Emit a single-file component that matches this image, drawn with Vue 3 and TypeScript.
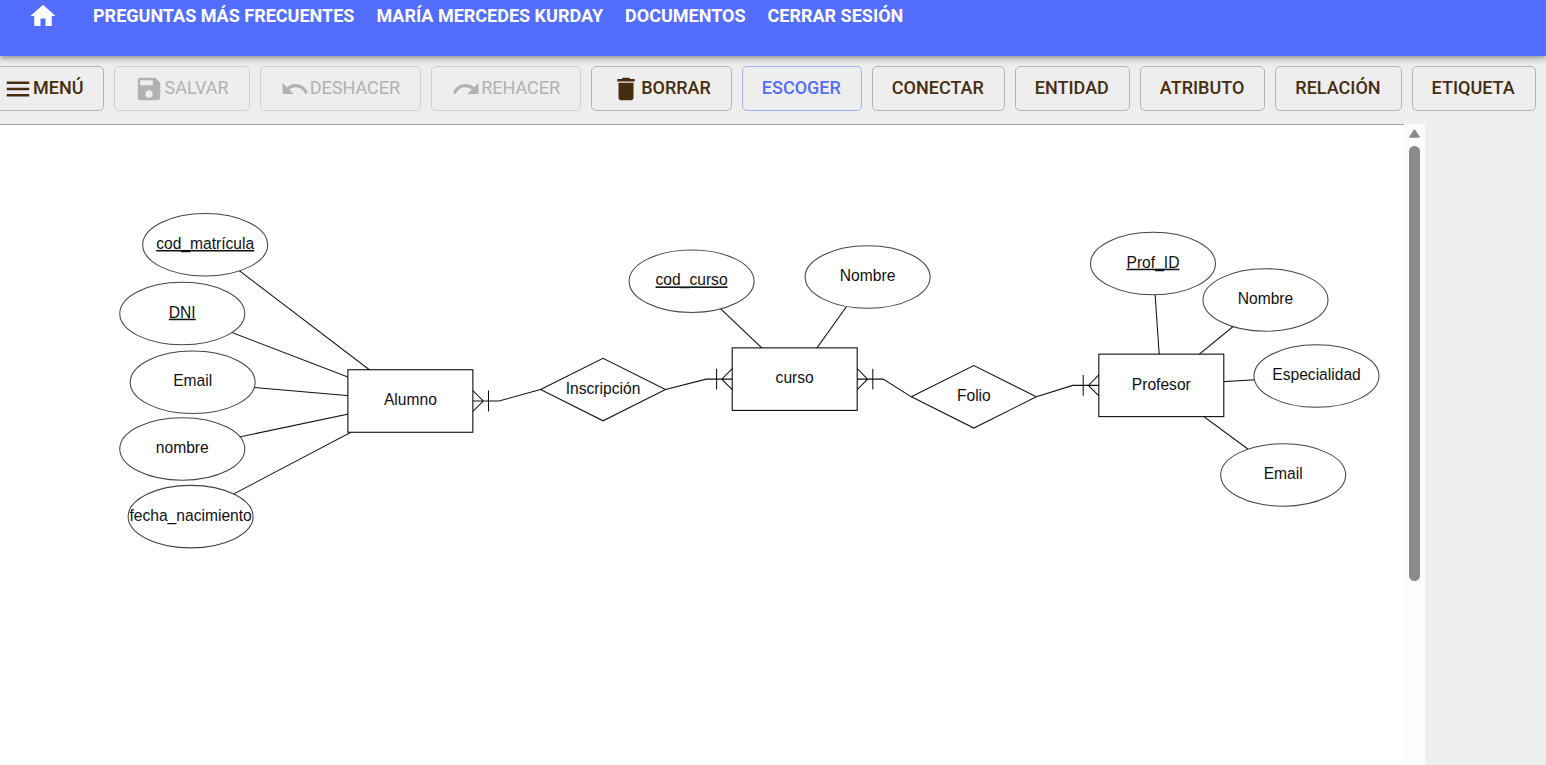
<script setup lang="ts">
interface Tool {
  label: string
  icon?: string
  state?: 'disabled' | 'selected'
}

interface Shape {
  id: string
  kind: 'entity' | 'attribute' | 'relation'
  label: string
  x: number
  y: number
  key?: boolean
}

const links: string[] = ['Preguntas más frecuentes', 'María Mercedes Kurday', 'Documentos', 'Cerrar sesión']

const icons: Record<string, string> = {
  menu: 'M3 18h18v-2H3v2zm0-5h18v-2H3v2zm0-7v2h18V6H3z',
  save: 'M17 3H5c-1.110 0-2 .9-2 2v14c0 1.100.890 2 2 2h14c1.100 0 2-.9 2-2V7l-4-4zm-5 16c-1.660 0-3-1.340-3-3s1.340-3 3-3 3 1.340 3 3-1.340 3-3 3zm3-10H5V5h10v4z',
  undo: 'M12.500 8c-2.650 0-5.050.990-6.900 2.600L2 7v9h9l-3.620-3.620c1.390-1.160 3.160-1.880 5.120-1.880 3.540 0 6.550 2.310 7.600 5.500l2.370-.780C21.080 11.030 17.150 8 12.500 8z',
  redo: 'M18.400 10.600C16.550 8.990 14.150 8 11.500 8c-4.650 0-8.580 3.030-9.960 7.220L3.900 16c1.050-3.190 4.050-5.500 7.600-5.500 1.950 0 3.730.720 5.120 1.880L13 16h9V7l-3.600 3.600z',
  trash: 'M6 19c0 1.100.9 2 2 2h8c1.100 0 2-.9 2-2V7H6v12zM19 4h-3.500l-1-1h-5l-1 1H5v2h14V4z',
}

const tools: Tool[] = [
  { label: 'Menú', icon: 'menu' },
  { label: 'Salvar', icon: 'save', state: 'disabled' },
  { label: 'Deshacer', icon: 'undo', state: 'disabled' },
  { label: 'Rehacer', icon: 'redo', state: 'disabled' },
  { label: 'Borrar', icon: 'trash' },
  { label: 'Escoger', state: 'selected' },
  { label: 'Conectar' },
  { label: 'Entidad' },
  { label: 'Atributo' },
  { label: 'Relación' },
  { label: 'Etiqueta' },
]

// Every shape is 120 x 60 canvas units, placed by its centre.
const shapes: Shape[] = [
  { id: 'matricula', kind: 'attribute', label: 'cod_matrícula', x: 197, y: 115, key: true },
  { id: 'dni', kind: 'attribute', label: 'DNI', x: 175, y: 181, key: true },
  { id: 'email', kind: 'attribute', label: 'Email', x: 185, y: 247 },
  { id: 'nombre', kind: 'attribute', label: 'nombre', x: 175, y: 311 },
  { id: 'fecha', kind: 'attribute', label: 'fecha_nacimiento', x: 183, y: 376 },
  { id: 'alumno', kind: 'entity', label: 'Alumno', x: 394, y: 265 },
  { id: 'inscripcion', kind: 'relation', label: 'Inscripción', x: 579, y: 254 },
  { id: 'codCurso', kind: 'attribute', label: 'cod_curso', x: 664, y: 150, key: true },
  { id: 'nombreCurso', kind: 'attribute', label: 'Nombre', x: 833, y: 146 },
  { id: 'curso', kind: 'entity', label: 'curso', x: 763, y: 244 },
  { id: 'folio', kind: 'relation', label: 'Folio', x: 935, y: 261 },
  { id: 'profId', kind: 'attribute', label: 'Prof_ID', x: 1107, y: 133, key: true },
  { id: 'nombreProf', kind: 'attribute', label: 'Nombre', x: 1215, y: 168 },
  { id: 'especialidad', kind: 'attribute', label: 'Especialidad', x: 1264, y: 241 },
  { id: 'emailProf', kind: 'attribute', label: 'Email', x: 1232, y: 336 },
  { id: 'profesor', kind: 'entity', label: 'Profesor', x: 1115, y: 250 },
]

const byId = (id: string): Shape => shapes.find((s) => s.id === id)!

const attributeLinks = [
  ['matricula', 'alumno'], ['dni', 'alumno'], ['email', 'alumno'], ['nombre', 'alumno'], ['fecha', 'alumno'],
  ['codCurso', 'curso'], ['nombreCurso', 'curso'],
  ['profId', 'profesor'], ['nombreProf', 'profesor'], ['especialidad', 'profesor'], ['emailProf', 'profesor'],
].map(([a, b]) => ({ from: byId(a), to: byId(b) }))

// One-or-many connector: crow's foot, bar, then a straight run to the diamond.
function connector(entityId: string, relationId: string): string {
  const e = byId(entityId)
  const r = byId(relationId)
  const side = r.x > e.x ? 1 : -1
  const edge = e.x + side * 60
  const tip = edge + side * 10
  const bar = edge + side * 15
  return [
    `M${edge} ${e.y}H${edge + side * 25}L${r.x - side * 60} ${r.y}`,
    `M${edge} ${e.y - 10}L${tip} ${e.y}L${edge} ${e.y + 10}`,
    `M${bar} ${e.y - 10}V${e.y + 10}`,
  ].join('')
}

const connectors: string[] = [
  connector('alumno', 'inscripcion'),
  connector('curso', 'inscripcion'),
  connector('curso', 'folio'),
  connector('profesor', 'folio'),
]
</script>

<template>
  <div class="app">
    <header class="header">
      <a class="home" href="#" aria-label="Inicio">
        <svg class="icon" viewBox="0 0 24 24"><path d="M10 20v-6h4v6h5v-8h3L12 3 2 12h3v8z" /></svg>
      </a>
      <nav class="nav">
        <a v-for="link in links" :key="link" href="#">{{ link }}</a>
      </nav>
    </header>

    <div class="toolbar" role="toolbar">
      <button
        v-for="tool in tools"
        :key="tool.label"
        type="button"
        class="tool"
        :class="tool.state"
        :disabled="tool.state === 'disabled'"
      >
        <svg v-if="tool.icon" class="icon" viewBox="0 0 24 24"><path :d="icons[tool.icon]" /></svg>
        <span class="caption">{{ tool.label }}</span>
      </button>
    </div>

    <main class="workspace">
      <div class="canvas">
        <svg class="diagram" viewBox="0 0 1348 614">
          <line
            v-for="(l, i) in attributeLinks"
            :key="i"
            class="stroke"
            :x1="l.from.x"
            :y1="l.from.y"
            :x2="l.to.x"
            :y2="l.to.y"
          />
          <g v-for="s in shapes" :key="s.id">
            <rect v-if="s.kind === 'entity'" class="entity" :x="s.x - 60" :y="s.y - 30" width="120" height="60" />
            <ellipse v-else-if="s.kind === 'attribute'" class="attribute" :cx="s.x" :cy="s.y" rx="60" ry="30" />
            <path v-else class="relation" :d="`M${s.x - 60} ${s.y}l60 -30l60 30l-60 30z`" />
            <text class="label" :class="{ key: s.key }" :x="s.x" :y="s.y + 4">{{ s.label }}</text>
          </g>
          <path v-for="d in connectors" :key="d" class="stroke" :d="d" />
        </svg>
      </div>
      <div class="scrollbar">
        <svg class="arrow" viewBox="0 0 11 9"><path d="M5.500 0.500Q6 0.500 6.500 1.200L10.700 7.500Q11 8.800 10 8.800H1Q0 8.800 0.300 7.500L4.500 1.200Q5 0.500 5.500 0.500z" /></svg>
        <div class="track"><div class="thumb"></div></div>
      </div>
    </main>
  </div>
</template>

<style>
body {
  margin: 0;
  background: #eeeeee;
}
</style>

<style scoped>
.app {
  display: flex;
  flex-direction: column;
  height: 100vh;
  overflow: hidden;
  font-family: Roboto, "Liberation Sans", sans-serif;
  font-size: 18px;
  font-weight: 500;
  line-height: 24px;
  text-transform: uppercase;
}
.icon {
  display: block;
  flex: none;
  width: 30px;
  height: 30px;
  fill: currentColor;
}
.header {
  display: flex;
  flex: none;
  align-items: flex-start;
  gap: 35px;
  box-sizing: border-box;
  height: 56px;
  padding: 1px 28px 0;
  background: #536dfe;
  box-shadow: 0 2px 4px -1px rgba(0, 0, 0, 0.2), 0 4px 5px 0 rgba(0, 0, 0, 0.14), 0 1px 10px 0 rgba(0, 0, 0, 0.12);
  color: #fff;
}
.header a {
  color: inherit;
  text-decoration: none;
}
.nav {
  display: flex;
  gap: 22px;
  padding-top: 3px;
  font-weight: 700;
  white-space: nowrap;
}
.toolbar {
  display: flex;
  flex: none;
  gap: 10px;
  margin-left: -17px;
  padding: 10px 0 13px;
}
.tool {
  display: flex;
  flex: none;
  align-items: center;
  box-sizing: border-box;
  height: 45px;
  padding: 0 20px 0 19px;
  border: 1px solid #b4b4b4;
  border-radius: 5px;
  background: transparent;
  color: #452d10;
  font: inherit;
  text-transform: inherit;
  white-space: nowrap;
}
.caption {
  padding-bottom: 2px;
}
.tool.disabled {
  border-color: #d0d0d0;
  color: #b2b2b2;
  font-weight: 400;
}
.tool.selected {
  border-color: #a3aff3;
  color: #536dfe;
}
.workspace {
  display: flex;
  flex: 1;
  min-height: 0;
  margin-right: 121px;
}
.canvas {
  flex: 1;
  min-width: 0;
  overflow: hidden;
  border-top: 1px solid #a0a0a0;
  background: #fff;
}
.diagram {
  display: block;
  width: 100%;
}
.stroke,
.entity,
.relation,
.attribute {
  fill: #fff;
  stroke: #111;
  stroke-width: 1;
}
.stroke {
  fill: none;
}
.entity {
  stroke: #000;
}
.attribute {
  stroke: #444;
}
.label {
  fill: #111;
  font-family: "Liberation Sans", Arial, sans-serif;
  font-size: 15px;
  font-weight: 400;
  text-anchor: middle;
  text-transform: none;
}
.key {
  text-decoration: underline;
}
.scrollbar {
  display: flex;
  flex: none;
  flex-direction: column;
  align-items: center;
  gap: 8px;
  width: 21px;
  padding-top: 5px;
  background: #fcfcfc;
}
.arrow {
  display: block;
  flex: none;
  width: 11px;
  height: 9px;
  fill: #8b8b8b;
}
.track {
  flex: 1;
}
.thumb {
  width: 11px;
  height: calc(70% + 2px);
  border-radius: 6px;
  background: #8b8b8b;
}
</style>
